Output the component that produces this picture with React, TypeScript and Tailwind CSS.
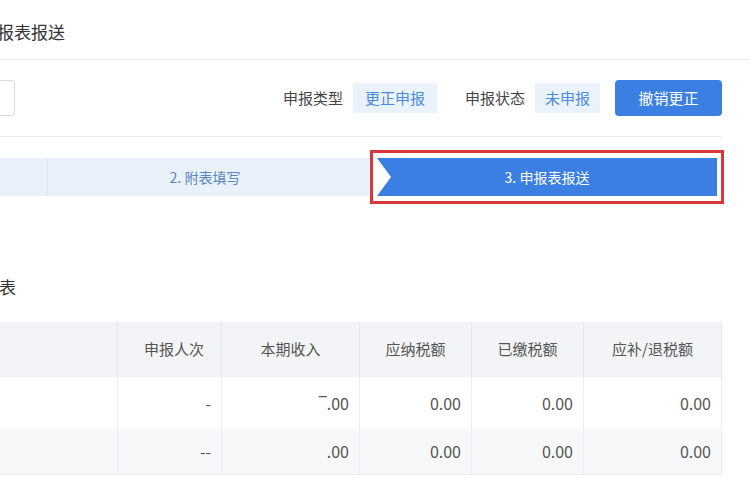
const font = { fontFamily: '"Noto Sans CJK SC", "Noto Sans", sans-serif' }

const cols = ["w-[118px]", "w-[104px]", "w-[138px]", "w-[112px]", "w-[112px]", "w-[138px]"]
const headers = ["", "申报人次", "本期收入", "应纳税额", "已缴税额", "应补/退税额"]
const rows = [
  ["", "-", "‾.00", "0.00", "0.00", "0.00"],
  ["", "--", ".00", "0.00", "0.00", "0.00"],
]

export default function App() {
  return (
    <div className="w-[750px] h-[500px] bg-white overflow-hidden text-[#333]" style={font}>
      <div className="h-[60px] flex items-center border-b border-[#e8eaee] pt-1">
        <span className="text-[17px] -ml-[3px]">报表报送</span>
      </div>
      <div className="mr-[28px] h-[77px] flex items-center border-b border-[#e8eaee]">
        <div className="w-[15px] h-[36px] border border-l-0 border-[#d8dce2] rounded-r" />
        <div className="flex-1" />
        <span className="text-[15px] text-[#444]">申报类型</span>
        <span className="ml-[10px] px-[12px] h-[30px] leading-[30px] bg-[#eaf2fc] text-[#4a8be0] text-[15px]">更正申报</span>
        <span className="ml-[28px] text-[15px] text-[#444]">申报状态</span>
        <span className="ml-[10px] px-[10px] h-[30px] leading-[30px] bg-[#eaf2fc] text-[#4a8be0] text-[15px]">未申报</span>
        <button className="ml-[15px] w-[107px] h-[36px] rounded bg-[#3b7fe3] text-white text-[15px]">撤销更正</button>
      </div>
      <div className="mt-[13px] flex items-center mr-[26px]">
        <div className="flex-1 h-[38px] bg-[#e9f1fb] relative flex items-center justify-center">
          <div className="absolute left-[40px] top-0 h-full w-[8px] border-r border-[#dbe6f4]" />
          <span className="text-[14px] text-[#5b87c2] ml-[40px]">2. 附表填写</span>
        </div>
        <div className="w-[354px] h-[54px] border-[3px] border-[#d9363e] flex items-center px-[4px]">
          <div
            className="flex-1 h-[38px] bg-[#3b7fe3] flex items-center justify-center"
            style={{ clipPath: "polygon(0 0,100% 0,100% 100%,0 100%,14px 50%)" }}
          >
            <span className="text-[14px] text-white">3. 申报表报送</span>
          </div>
        </div>
      </div>
      <div className="mt-[70px] text-[17px] -ml-[1px]">表</div>
      <div className="mt-[22px] w-[722px] border-b border-[#eceef1]">
        <div className="flex h-[55px] bg-[#f2f4f7]">
          {headers.map((h, i) => (
            <div key={i} className={`${cols[i]} border-r border-[#e4e7ec] flex items-center ${i === 1 ? "justify-end pr-[17px]" : "justify-center"} text-[15px] text-[#555]`}>
              {h}
            </div>
          ))}
        </div>
        {rows.map((r, ri) => (
          <div key={ri} className={`flex ${ri === 0 ? "h-[52px] bg-white" : "h-[45px] bg-[#f7f8fa]"}`}>
            {r.map((c, i) => (
              <div key={i} className={`${cols[i]} border-r border-[#eceef1] flex items-center justify-end pr-[10px] text-[16px] text-[#555]`}>
                {c}
              </div>
            ))}
          </div>
        ))}
      </div>
    </div>
  )
}
